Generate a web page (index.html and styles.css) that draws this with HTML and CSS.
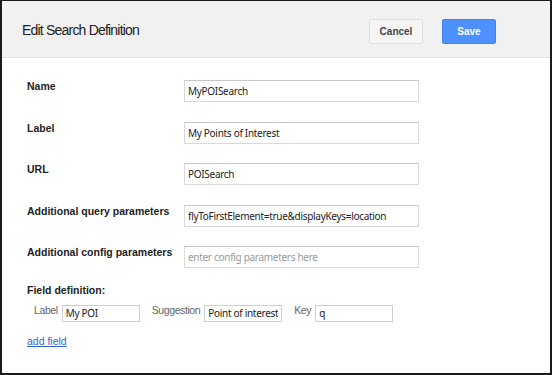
FILE: index.html
```html
<!DOCTYPE html>
<html lang="en">
<head>
    <meta charset="UTF-8">
    <meta name="viewport" content="width=device-width, initial-scale=1.0">
    <title>Edit Search Definition</title>
    <link rel="stylesheet" href="styles.css">
</head>
<body>
    <div class="dialog">
        <header class="dialog-header">
            <h1>Edit Search Definition</h1>
            <div class="actions">
                <button class="btn btn-cancel">Cancel</button>
                <button class="btn btn-save">Save</button>
            </div>
        </header>

        <section class="dialog-body">
            <div class="row">
                <label for="name">Name</label>
                <input type="text" id="name" value="MyPOISearch">
            </div>
            <div class="row">
                <label for="label">Label</label>
                <input type="text" id="label" value="My Points of Interest">
            </div>
            <div class="row">
                <label for="url">URL</label>
                <input type="text" id="url" value="POISearch">
            </div>
            <div class="row">
                <label for="query">Additional query parameters</label>
                <input type="text" id="query" value="flyToFirstElement=true&amp;displayKeys=location">
            </div>
            <div class="row">
                <label for="config">Additional config parameters</label>
                <input type="text" id="config" placeholder="enter config parameters here">
            </div>

            <h2>Field definition:</h2>
            <div class="field-row">
                <span class="field-label">Label</span>
                <input type="text" class="small" value="My POI">
                <span class="field-label">Suggestion</span>
                <input type="text" class="small" value="Point of interest">
                <span class="field-label">Key</span>
                <input type="text" class="small" value="q">
            </div>

            <a href="#" class="add-field">add field</a>
        </section>
    </div>
</body>
</html>
```

FILE: styles.css
```css
* {
    margin: 0;
    padding: 0;
    box-sizing: border-box;
}

body {
    font-family: 'Liberation Sans', Arial, sans-serif;
    background-color: #ffffff;
    color: #222;
}

.dialog {
    width: 552px;
    height: 375px;
    border: 2px solid #1a1a1a;
    border-top-width: 1px;
    background-color: #ffffff;
}

.dialog-header {
    display: flex;
    align-items: center;
    justify-content: space-between;
    height: 57px;
    padding: 4px 54px 0 20px;
    background-color: #f1f1f1;
    border-bottom: 1px solid #e0e0e0;
}

h1 {
    font-size: 14px;
    letter-spacing: -0.8px;
    font-weight: normal;
    color: #222;
    margin-top: -3px;
}

.actions {
    display: flex;
    gap: 19px;
}

.btn {
    width: 54px;
    height: 25px;
    font-family: 'Liberation Sans', Arial, sans-serif;
    font-size: 10px;
    font-weight: bold;
    border-radius: 2px;
    cursor: pointer;
}

.btn-cancel {
    background-color: #f5f5f5;
    border: 1px solid #dcdcdc;
    color: #444;
}

.btn-save {
    background-color: #4d90fe;
    border: 1px solid #3f84f4;
    color: #ffffff;
}

.dialog-body {
    padding: 22px 0 0 25px;
}

.row {
    display: flex;
    align-items: flex-start;
    margin-bottom: 19.5px;
}

.row label {
    width: 157px;
    font-size: 10.5px;
    line-height: 13px;
    font-weight: bold;
    white-space: nowrap;
    color: #222;
}

.row input {
    width: 235px;
    height: 22px;
    padding: 0 3px;
    border: 1px solid #d9d9d9;
    border-top-color: #c8c8c8;
    font-family: 'Noto Sans', sans-serif;
    font-size: 10px;
    letter-spacing: -0.3px;
    color: #222;
}

.row input::placeholder {
    color: #999;
}

h2 {
    font-size: 10.5px;
    line-height: 13px;
    font-weight: bold;
    color: #222;
    margin-top: -4px;
}

.field-row {
    display: flex;
    align-items: flex-start;
    margin: 7px 0 0 7px;
}

.field-label {
    font-size: 10.5px;
    letter-spacing: -0.4px;
    line-height: 13px;
    color: #666;
    margin-right: 4px;
}

.field-row input {
    width: 78px;
    height: 17px;
    padding: 0 3px;
    margin-top: 1px;
    margin-right: 12px;
    border: 1px solid #cfcfcf;
    font-family: 'Noto Sans', sans-serif;
    font-size: 10px;
    letter-spacing: -0.3px;
    color: #222;
}

.add-field {
    display: inline-block;
    margin-top: 13px;
    font-size: 10.5px;
    line-height: 13px;
    color: #3366cc;
}
```
